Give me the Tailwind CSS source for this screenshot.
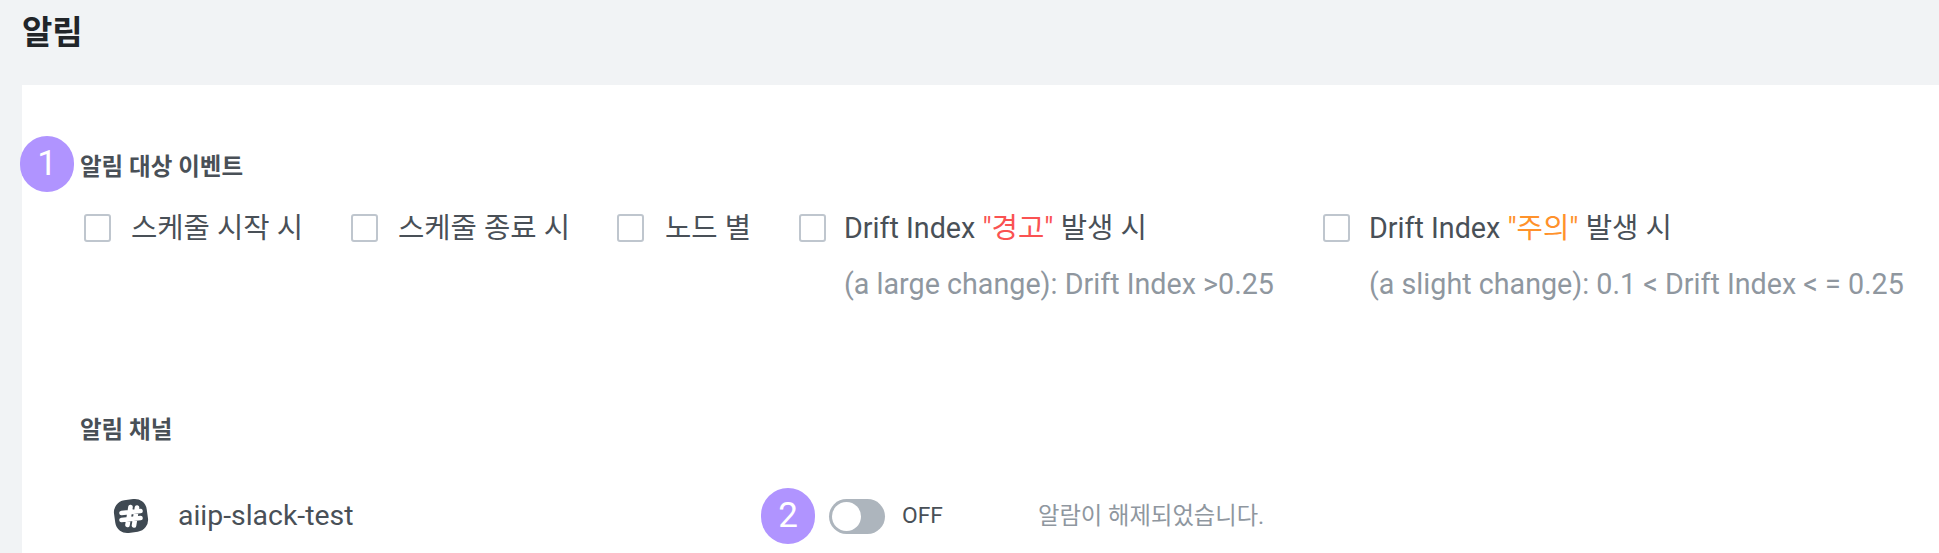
<!DOCTYPE html>
<html lang="ko">
<head>
  <meta charset="UTF-8" />
  <title>알림</title>
  <script src="https://cdn.jsdelivr.net/npm/@tailwindcss/browser@4"></script>
</head>
<body class="bg-[#f1f3f5] font-['Roboto','Noto_Sans_CJK_KR',sans-serif] text-[#495057] overflow-hidden h-[553px]">
  <header class="h-[85px] pl-[22px] pt-[12px]">
    <h1 class="text-[33px] leading-[42px] font-bold text-[#212529]">알림</h1>
  </header>

  <main class="relative ml-[22px] bg-white h-[468px] pl-[58px]">
    <!-- callout badges -->
    <span class="absolute left-[-2px] top-[51px] flex h-[56px] w-[54px] items-center justify-center rounded-full bg-[#b094ff] text-[35px] text-white">1</span>

    <h2 class="pt-[66px] text-[23.5px] leading-[32px] font-bold">알림 대상 이벤트</h2>

    <div class="mt-[29px] flex items-start">
      <label class="flex w-[271px] items-center pl-[4px]">
        <span class="h-[28px] w-[27px] shrink-0 rounded-[3px] border-2 border-[#bfc6ce]"></span>
        <span class="ml-[20px] text-[28.6px] leading-[32px]">스케줄 시작 시</span>
      </label>
      <label class="flex w-[266px] items-center">
        <span class="h-[28px] w-[27px] shrink-0 rounded-[3px] border-2 border-[#bfc6ce]"></span>
        <span class="ml-[20px] text-[28.6px] leading-[32px]">스케줄 종료 시</span>
      </label>
      <label class="flex w-[182px] items-center">
        <span class="h-[28px] w-[27px] shrink-0 rounded-[3px] border-2 border-[#bfc6ce]"></span>
        <span class="ml-[21px] text-[28.6px] leading-[32px]">노드 별</span>
      </label>
      <div class="w-[524px]">
        <label class="flex items-center">
          <span class="h-[28px] w-[27px] shrink-0 rounded-[3px] border-2 border-[#bfc6ce]"></span>
          <span class="ml-[18px] text-[28.7px] leading-[32px]">Drift Index <span class="text-[#fa5252]">"경고"</span> 발생 시</span>
        </label>
        <p class="mt-[24px] ml-[45px] text-[28.7px] leading-[32px] text-[#8f979f]">(a large change): Drift Index &gt;0.25</p>
      </div>
      <div>
        <label class="flex items-center">
          <span class="h-[28px] w-[27px] shrink-0 rounded-[3px] border-2 border-[#bfc6ce]"></span>
          <span class="ml-[19px] text-[28.7px] leading-[32px]">Drift Index <span class="text-[#ff922b]">"주의"</span> 발생 시</span>
        </label>
        <p class="mt-[24px] ml-[46px] text-[28.7px] leading-[32px] text-[#8f979f] whitespace-nowrap">(a slight change): 0.1 &lt; Drift Index &lt; = 0.25</p>
      </div>
    </div>

    <h2 class="mt-[114px] text-[23.5px] leading-[32px] font-bold">알림 채널</h2>

    <div class="mt-[52px] flex items-center">
      <svg class="ml-[33px] h-[36px] w-[36px] shrink-0" viewBox="0 0 36 36">
        <rect x="1.5" y="1.5" width="33" height="33" rx="12" fill="#3f4952" transform="rotate(-8 18 18)" />
        <path d="M14.5 27 L17.5 9 M21 27.5 L24 9.5 M8.5 15 L27.5 13 M8.5 22 L27.5 20" stroke="#fff" stroke-width="4.6" stroke-linecap="round" fill="none" />
      </svg>
      <span class="ml-[29px] w-[651px] shrink-0 text-[28.4px] leading-[36px]">aiip-slack-test</span>

      <span class="absolute left-[739px] top-[403px] flex h-[56px] w-[54px] items-center justify-center rounded-full bg-[#b094ff] text-[35px] text-white">2</span>

      <span class="flex h-[35px] w-[56px] shrink-0 items-center rounded-full bg-[#adb5bd] pl-[3px]">
        <span class="h-[29px] w-[29px] rounded-full bg-white"></span>
      </span>
      <span class="ml-[17px] w-[136px] shrink-0 text-[22.8px] leading-[36px]">OFF</span>
      <span class="text-[23.3px] leading-[36px] text-[#8f979f]">알람이 해제되었습니다.</span>
    </div>
  </main>
</body>
</html>
